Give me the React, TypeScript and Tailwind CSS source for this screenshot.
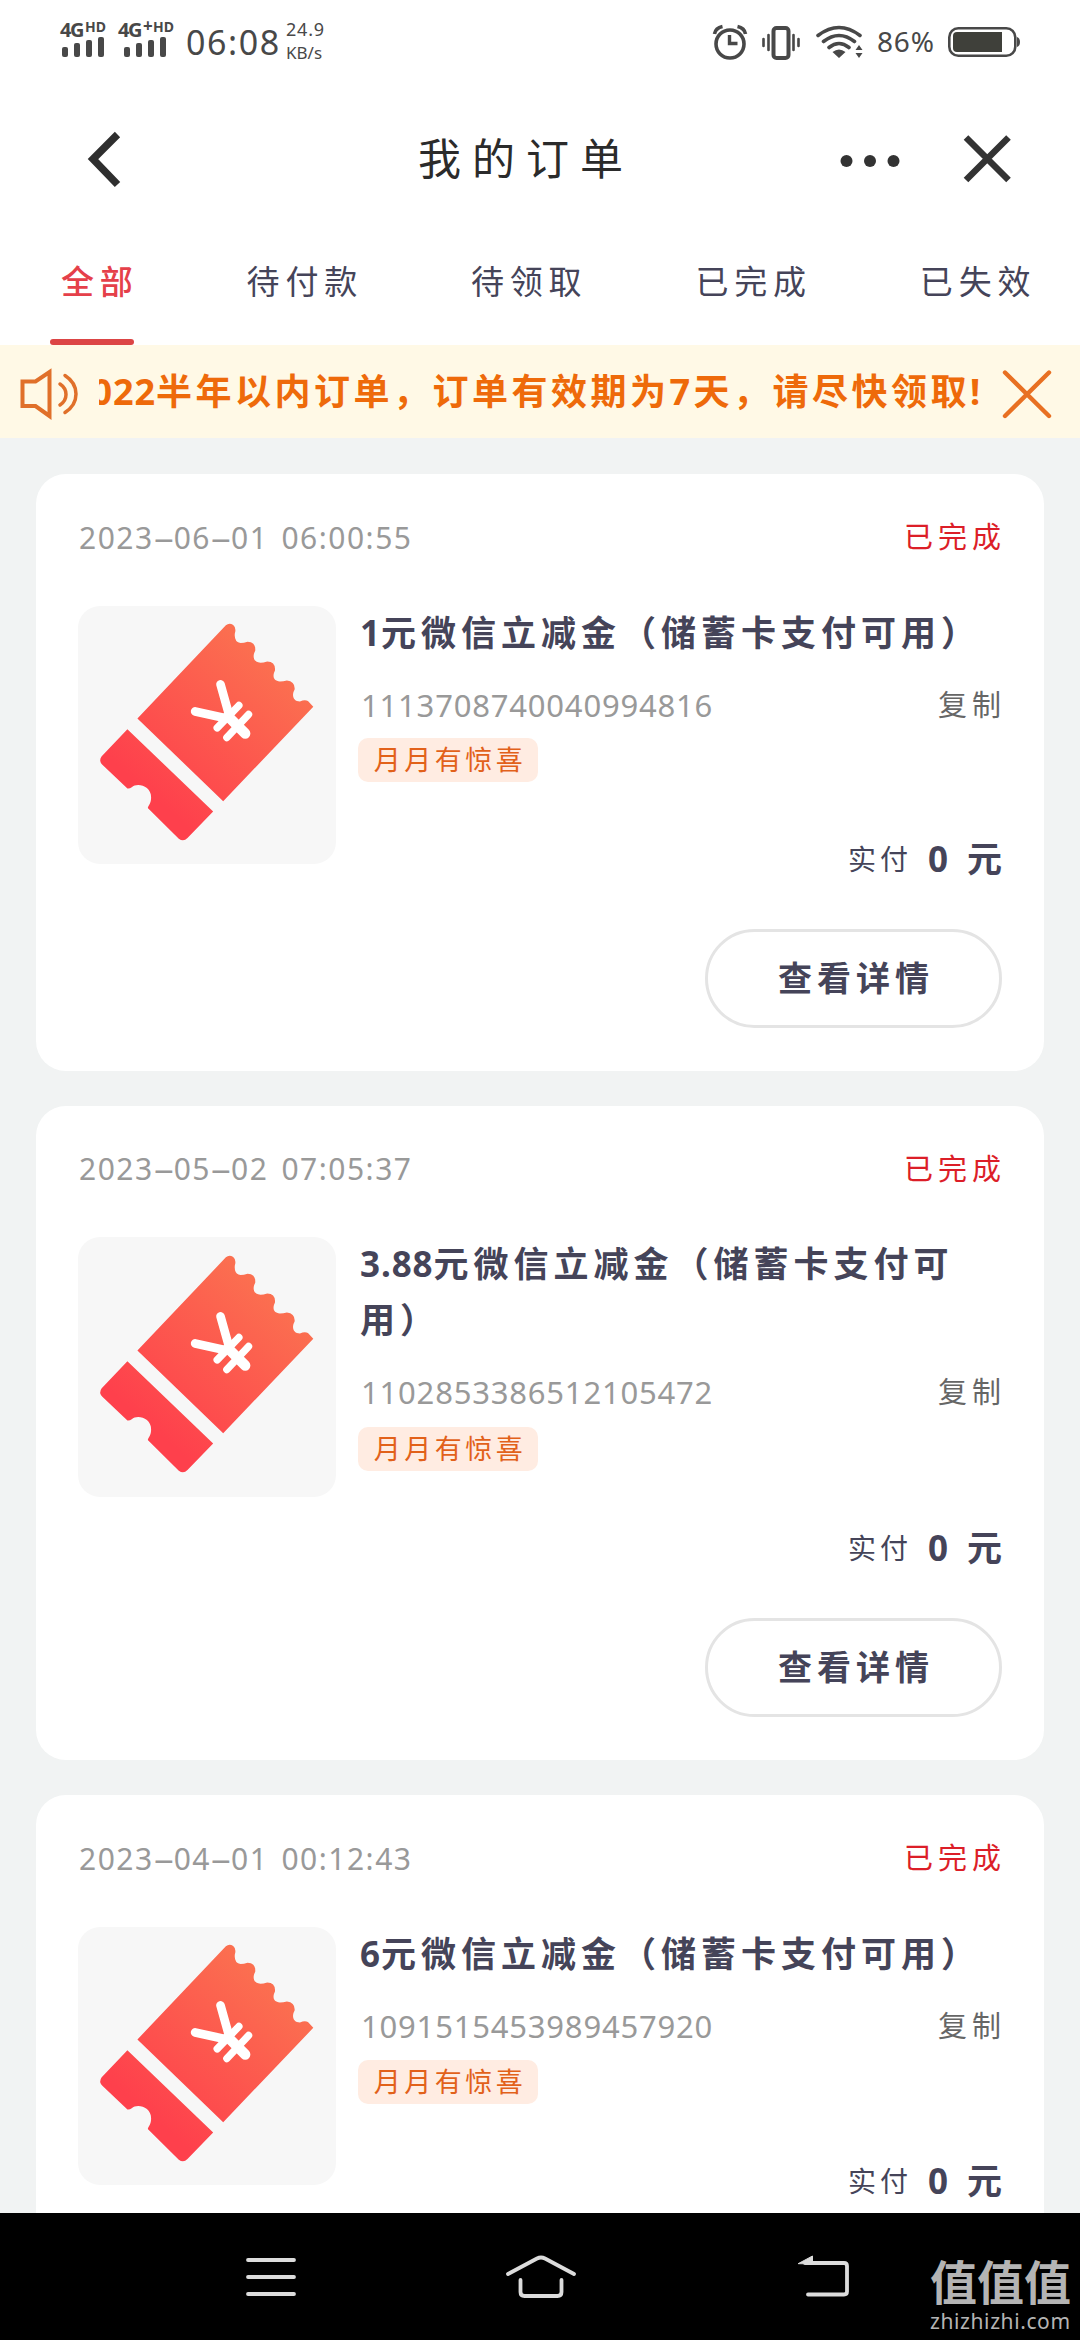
import React from "react";

interface IOrder {
  id: string;
  time: string;
  amount: string;
  name: string;
  cardClass: string;
  headClass: string;
  thumbClass: string;
  tagClass: string;
}

const tabs = ["全部", "待付款", "待领取", "已完成", "已失效"];

const orders: IOrder[] = [
  {
    id: "1113708740040994816",
    time: "2023-06-01 06:00:55",
    amount: "1",
    name: "元微信立减金（储蓄卡支付可用）",
    cardClass: "h-[597px]",
    headClass: "h-[126px]",
    thumbClass: "h-[258px]",
    tagClass: "mt-[3px]",
  },
  {
    id: "1102853386512105472",
    time: "2023-05-02 07:05:37",
    amount: "3.88",
    name: "元微信立减金（储蓄卡支付可用）",
    cardClass: "h-[654px]",
    headClass: "h-[125px]",
    thumbClass: "h-[260px]",
    tagClass: "mt-[5px]",
  },
  {
    id: "1091515453989457920",
    time: "2023-04-01 00:12:43",
    amount: "6",
    name: "元微信立减金（储蓄卡支付可用）",
    cardClass: "h-[597px]",
    headClass: "h-[126px]",
    thumbClass: "h-[258px]",
    tagClass: "mt-[4px]",
  },
];

function Signal({ plus }: { plus?: boolean }) {
  return (
    <div className={plus ? "w-[56px]" : "w-[47px]"}>
      <div className="flex h-[16px] items-start font-bold leading-none text-[#484848]">
        <span className="w-[25px] text-[20px] leading-[17px] tracking-[-1.5px]">
          4G
        </span>
        {plus && <span className="w-[10px] text-[17px] leading-[9px]">+</span>}
        <span className="text-[14px] leading-[11px]">HD</span>
      </div>
      <div
        className={`flex h-[20px] items-end gap-[6px] ${
          plus ? "pl-[6px]" : "pl-[2px]"
        }`}
      >
        <i className="h-[10px] w-[6px] rounded-[2px] bg-[#484848]" />
        <i className="h-[14px] w-[6px] rounded-[2px] bg-[#484848]" />
        <i className="h-[17px] w-[6px] rounded-[2px] bg-[#484848]" />
        <i className="h-[20px] w-[6px] rounded-[2px] bg-[#484848]" />
      </div>
    </div>
  );
}

function StatusBar() {
  return (
    <div className="flex h-[86px] items-start pl-[60px] text-[#484848]">
      <div className="flex gap-[11px] pt-[21px]">
        <Signal />
        <Signal plus />
      </div>
      <span className="ml-[12px] mt-[22px] w-[100px] text-[34px] leading-[40px] tracking-[1.6px]">
        06:08
      </span>
      <div className="mt-[18px] flex flex-col text-[18px] leading-[23px]">
        <span className="tracking-[0.8px]">24.9</span>
        <span className="text-[17px]">KB/s</span>
      </div>
      <svg
        viewBox="710 20 160 44"
        className="ml-auto mt-5 h-[44px] w-[160px] shrink-0"
        fill="none"
        stroke="#484848"
      >
        <circle cx="730" cy="44" r="14" strokeWidth="3.6" />
        <path d="M729.5 35v8.5h8" strokeWidth="3.4" />
        <path
          d="M714.5 34q1-6 8-7.5M745.5 34q-1-6-8-7.5"
          strokeWidth="3.6"
        />
        <rect x="773.5" y="28" width="15" height="30" rx="3" strokeWidth="4" />
        <path
          d="M763.5 39v7M768.5 35v15M793.5 35v15M798.5 39v7"
          strokeWidth="2.6"
          strokeLinecap="round"
        />
        <path
          d="M818 35.5q21-16 42 0M823.5 41.5q15.5-12 31 0M829 47.5q10-8 20 0"
          strokeWidth="3.6"
          strokeLinecap="round"
        />
        <path
          d="M832.5 52q6.5-5 13 0l-6.5 6zM855.5 50l3.5-5 3.500 5zM855.5 53l3.5 5 3.500-5z"
          fill="#484848"
          stroke="none"
        />
      </svg>
      <span className="ml-[7px] mt-[23px] w-[71px] text-[28px] leading-[36px] tracking-[0.8px]">
        86%
      </span>
      <svg viewBox="948 24 132 36" className="mt-6 h-[36px] w-[132px] shrink-0">
        <rect
          x="949.3"
          y="28.3"
          width="66"
          height="27.5"
          rx="9"
          fill="none"
          stroke="#484848"
          strokeWidth="2.6"
        />
        <path d="M957 32h45v20h-45q-4 0-4-4V36q0-4 4-4z" fill="#3f403a" />
        <path d="M1017 37q3 1 3 5t-3 5z" fill="#484848" />
      </svg>
    </div>
  );
}

function Header() {
  return (
    <div className="flex h-[146px] items-center">
      <svg viewBox="0 0 160 146" className="h-[146px] w-[160px]">
        <path
          d="M117.5 48.5 93 73l24.5 25.5"
          fill="none"
          stroke="#2f2f2f"
          strokeWidth="7.5"
        />
      </svg>
      <h1 className="w-[520px] pl-[258px] text-[43px] leading-[60px] tracking-[11px] whitespace-nowrap text-[#2b2b2b]">
        我的订单
      </h1>
      <svg viewBox="680 86 400 146" className="h-[146px] w-[400px]">
        <g fill="#333">
          <circle cx="846.5" cy="161" r="6" />
          <circle cx="870" cy="161" r="6" />
          <circle cx="893.5" cy="161" r="6" />
        </g>
        <path
          d="M966 137.5 1008.5 180M1008.5 137.5 966 180"
          stroke="#333"
          strokeWidth="6.5"
        />
      </svg>
    </div>
  );
}

function Notice() {
  return (
    <div className="flex h-[93px] items-center bg-[#fff9e6]">
      <svg
        viewBox="0 345 99 93"
        className="h-[93px] w-[99px] shrink-0"
        fill="none"
        stroke="#e0702a"
        strokeLinecap="round"
      >
        <path d="M22.5 381.500h13L49.5 372v44L35.5 406h-13z" strokeWidth="4" />
        <path
          d="M60 384q6 4 6 10.500t-6 10.500M65 375.500q11 7 11 18.500t-11 18.500"
          strokeWidth="3.5"
        />
      </svg>
      <div className="flex w-[885px] justify-end overflow-hidden">
        <p className="text-[36px] font-bold leading-[60px] tracking-[3.5px] whitespace-nowrap text-[#ee6a0a]">
          <span className="tracking-[0.9px]">2022</span>
          半年以内订单，订单有效期为
          <span>7</span>天，请尽快领取
          <span className="inline-block w-[14px] tracking-normal">!</span>
        </p>
      </div>
      <svg viewBox="984 345 96 93" className="h-[93px] w-[96px] shrink-0">
        <path
          d="M1005 372.5 1049 416M1049 372.5 1005 416"
          stroke="#e87022"
          strokeWidth="4.4"
          strokeLinecap="round"
        />
      </svg>
    </div>
  );
}

function Ticket() {
  return (
    <svg viewBox="175 438 773 773" className="h-full w-full">
      <defs>
        <linearGradient
          id="ticket"
          gradientUnits="userSpaceOnUse"
          x1="760"
          y1="600"
          x2="400"
          y2="1010"
        >
          <stop offset="0" stopColor="#fb7050" />
          <stop offset="1" stopColor="#fe404c" />
        </linearGradient>
      </defs>
      <path
        fill="url(#ticket)"
        d="M353 775 618 496Q628 487 640 495Q650 503 645 520Q642 546 662 549Q672 549 683 545Q708 545 706 572C696 590 702 608 722 608Q730 608 742 604Q768 605 765 632C757 648 760 663 780 664Q790 664 801 661Q826 664 824 688C814 706 820 724 840 724Q855 718 864 723L880 740 610 1023Z"
      />
      <path
        fill="url(#ticket)"
        d="M323 807 580 1054 503 1133Q491 1145 477 1135L384 1043C388 1030 394 1030 394 1010C394 977 352 965 336 981Q330 986 323 985L248 914Q236 901 246 888Z"
      />
      <g stroke="#fff" strokeLinecap="round" fill="none">
        <path d="M602 673 627 762M526 754 618 774" strokeWidth="26" />
        <path d="M624 768 676 820" strokeWidth="31" />
        <path d="M657 736 592 803M686 763 621 832" strokeWidth="22" />
      </g>
    </svg>
  );
}

function OrderCard({ order }: { order: IOrder }) {
  return (
    <div
      className={`${order.cardClass} shrink-0 rounded-[30px] bg-white px-[42px]`}
    >
      <div className={`${order.headClass} flex items-center justify-between`}>
        <span className="flex pl-[1px] text-[30px] tracking-[1.5px] text-[#999]">
          {order.time.split("").map((item, index) =>
            item === "-" ? (
              <span
                key={index}
                className="w-[20px] scale-x-[2.3] text-center tracking-normal"
              >
                {item}
              </span>
            ) : (
              <span key={index} className={item === " " ? "w-[13px]" : ""}>
                {item}
              </span>
            )
          )}
        </span>
        <span className="mr-[-4px] text-[29px] tracking-[5px] text-[#dc1e28]">
          已完成
        </span>
      </div>
      <div className="flex items-start gap-6">
        <div
          className={`${order.thumbClass} mt-[6px] w-[258px] shrink-0 overflow-hidden rounded-[22px] bg-[#f7f7f7]`}
        >
          <Ticket />
        </div>
        <div className="flex w-[642px] shrink-0 flex-col">
          <h2 className="mt-[5px] w-[626px] text-[35px] font-bold leading-[56px] tracking-[5px] text-[#454459]">
            <span className="tracking-[0.9px]">{order.amount}</span>
            {order.name}
          </h2>
          <div className="mt-[14px] flex h-[60px] items-center justify-between">
            <span className="pl-[1px] text-[31px] tracking-[0.8px] text-[#999]">
              {order.id}
            </span>
            <button className="mr-[-4px] text-[29px] tracking-[5px] text-[#666]">
              复制
            </button>
          </div>
          <span
            className={`${order.tagClass} ml-[-2px] flex h-[44px] w-[180px] items-center justify-center rounded-[10px] bg-[#ffece2] pl-[4px] text-[27px] tracking-[3.5px] text-[#e2611a]`}
          >
            月月有惊喜
          </span>
          <div className="mt-[52px] flex h-[50px] items-center justify-end text-[#454459]">
            <span className="text-[28px] tracking-[4px]">实付</span>
            <span className="ml-[16px] w-[39px] text-[35px] font-bold">0</span>
            <span className="text-[35px] font-bold">元</span>
          </div>
          <button className="mt-[45px] h-[99px] w-[297px] self-end rounded-full border-[3px] border-[#e4e4e4] pl-[5px] text-[34px] font-bold tracking-[5px] text-[#454459]">
            查看详情
          </button>
        </div>
      </div>
    </div>
  );
}

function NavBar() {
  return (
    <div className="flex h-[127px] shrink-0 bg-black">
      <svg
        viewBox="0 2213 930 127"
        className="h-[127px] w-[930px]"
        fill="none"
        stroke="#dcdcdc"
        strokeWidth="3.8"
        strokeLinecap="round"
      >
        <path d="M248 2260h46M248 2277h46M248 2294h46" />
        <path d="M508 2274 537 2258.500q4-2 8 0L574 2274" />
        <path d="M520.5 2280v12q0 4 4 4h33q4 0 4-4v-12" />
        <path d="M808 2294.500h36q3 0 3-3v-25.500q0-3-3-3H805" />
        <path d="M798.5 2263.500 812.5 2256v7.500z" fill="#dcdcdc" strokeWidth="1" />
      </svg>
      <div className="flex flex-col pt-[42px] text-[#b4b4b4]">
        <span className="text-[47px] font-bold leading-[54px]">值值值</span>
        <span className="text-[21px] leading-[24px] tracking-[0.6px]">
          zhizhizhi.com
        </span>
      </div>
    </div>
  );
}

export default function App() {
  const [active, setActive] = React.useState(0);

  return (
    <div className="flex h-[2340px] w-[1080px] flex-col overflow-hidden bg-[#f1f3f3] font-['Noto_Sans','Noto_Sans_CJK_SC',sans-serif]">
      <div className="bg-white">
        <StatusBar />
        <Header />
        <div className="flex h-[113px] gap-[108px] pl-[61px]">
          {tabs.map((item, index) => (
            <button
              key={item}
              onClick={() => setActive(index)}
              className={`relative pb-[14px] text-[33px] tracking-[5.8px] whitespace-nowrap ${
                active === index
                  ? "font-medium text-[#e5404a]"
                  : "text-[#454459]"
              }`}
            >
              {item}
              {active === index && (
                <i className="absolute bottom-0 left-[-11px] h-[6px] w-[84px] rounded-full bg-[#dc4545]" />
              )}
            </button>
          ))}
        </div>
      </div>
      <Notice />
      <div className="flex min-h-0 flex-1 flex-col gap-[35px] overflow-hidden px-9 pt-9">
        {orders.map((order) => (
          <OrderCard key={order.id} order={order} />
        ))}
      </div>
      <NavBar />
    </div>
  );
}
